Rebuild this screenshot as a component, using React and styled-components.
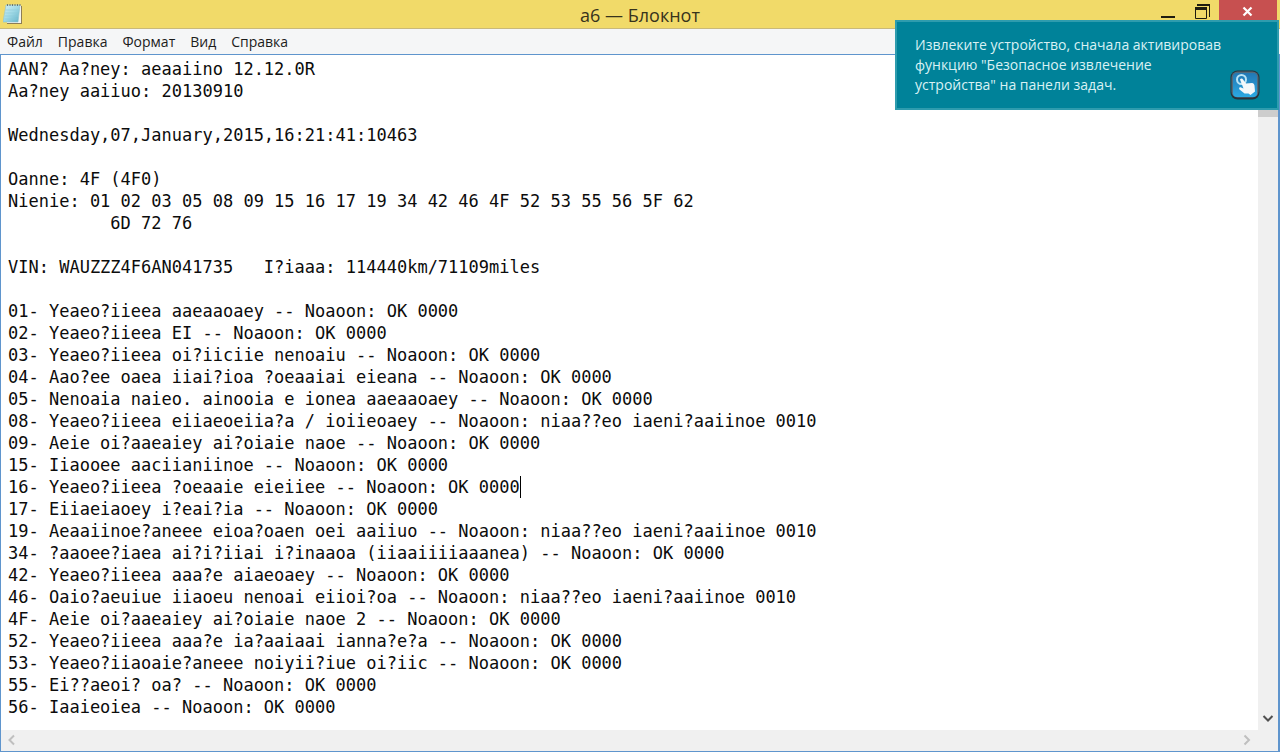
import React, { useState } from "react";
import styled, { createGlobalStyle } from "styled-components";

const GlobalStyle = createGlobalStyle`
    * {
        box-sizing: border-box;
    }
    body {
        margin: 0;
        font-family: "Open Sans", "Noto Sans", sans-serif;
        overflow: hidden;
    }
    button, textarea {
        font: inherit;
        margin: 0;
        padding: 0;
        border: 0;
        background: none;
    }
`;

const Window = styled.div`
    height: 100vh;
    display: flex;
    flex-direction: column;
    background: #f5f6f7;
`;

const TitleBar = styled.header`
    display: grid;
    grid-template-columns: 1fr auto 1fr;
    height: 29px;
    background: #f1da69;
    border-bottom: 1px solid #c9b97a;
`;

const AppIcon = styled.svg`
    width: 20px;
    height: 22px;
    margin: 3px 0 0 3px;
`;

const Title = styled.h1`
    margin: 0;
    padding-top: 2px;
    font-size: 18px;
    font-weight: 400;
    line-height: 26px;
    color: #37331c;
`;

const Controls = styled.div`
    display: flex;
    justify-content: flex-end;
    padding-right: 3px;
`;

const ControlButton = styled.button`
    width: ${({ $close }) => ($close ? "58px" : "34px")};
    height: 22px;
    background: ${({ $close }) => ($close ? "#c75050" : "transparent")};

    svg {
        display: block;
        margin: 0 auto;
    }
`;

const MenuBar = styled.nav`
    display: flex;
    gap: 15px;
    height: 25px;
    padding-left: 7px;
    background: #f5f6f7;
`;

const MenuItem = styled.button`
    font-size: 14px;
    line-height: 25px;
    color: #1c1c1c;
`;

const Body = styled.main`
    flex: 1;
    min-height: 0;
    display: grid;
    grid-template-columns: 1fr 20px;
    grid-template-rows: 1fr 21px;
    border: 1px solid #5f95cd;
    border-right-width: 2px;
    background: #f0f0f0;
`;

const Editor = styled.div`
    position: relative;
    min-width: 0;
    background: #fff;
    font-family: "DejaVu Sans Mono", monospace;
    font-size: 17px;
    line-height: 22px;
`;

const TextArea = styled.textarea`
    display: block;
    width: 100%;
    height: 100%;
    padding: 3px 7px 0;
    color: #0c0c0c;
    white-space: pre;
    resize: none;
    outline: none;
    overflow: hidden;
`;

const Caret = styled.span`
    position: absolute;
    width: 1px;
    height: 22px;
    background: #000;
`;

const VScroll = styled.div`
    display: flex;
    flex-direction: column;
    justify-content: space-between;
`;

const Thumb = styled.div`
    height: 62px;
    background: #cdcdcd;
`;

const HScroll = styled.div`
    display: flex;
    justify-content: space-between;
`;

const ScrollButton = styled.button`
    width: 20px;
    height: 20px;

    svg {
        display: block;
        margin: auto;
    }
`;

const Toast = styled.aside`
    position: fixed;
    top: 20px;
    right: 1px;
    width: 384px;
    display: flex;
    align-items: flex-end;
    justify-content: space-between;
    padding: 13px 17px 8px 18px;
    background: #008299;
    border: 2px solid #2e9cae;
`;

const ToastText = styled.p`
    margin: 0;
    padding-bottom: 5px;
    width: 310px;
    font-size: 14px;
    line-height: 20px;
    color: #d9f1f4;
`;

const menu = ["Файл", "Правка", "Формат", "Вид", "Справка"];

const lines = [
    "AAN? Aa?ney: aeaaiino 12.12.0R",
    "Aa?ney aaiiuo: 20130910",
    "",
    "Wednesday,07,January,2015,16:21:41:10463",
    "",
    "Oanne: 4F (4F0)",
    "Nienie: 01 02 03 05 08 09 15 16 17 19 34 42 46 4F 52 53 55 56 5F 62",
    "          6D 72 76",
    "",
    "VIN: WAUZZZ4F6AN041735   I?iaaa: 114440km/71109miles",
    "",
    "01- Yeaeo?iieea aaeaaoaey -- Noaoon: OK 0000",
    "02- Yeaeo?iieea EI -- Noaoon: OK 0000",
    "03- Yeaeo?iieea oi?iiciie nenoaiu -- Noaoon: OK 0000",
    "04- Aao?ee oaea iiai?ioa ?oeaaiai eieana -- Noaoon: OK 0000",
    "05- Nenoaia naieo. ainooia e ionea aaeaaoaey -- Noaoon: OK 0000",
    "08- Yeaeo?iieea eiiaeoeiia?a / ioiieoaey -- Noaoon: niaa??eo iaeni?aaiinoe 0010",
    "09- Aeie oi?aaeaiey ai?oiaie naoe -- Noaoon: OK 0000",
    "15- Iiaooee aaciianiinoe -- Noaoon: OK 0000",
    "16- Yeaeo?iieea ?oeaaie eieiiee -- Noaoon: OK 0000",
    "17- Eiiaeiaoey i?eai?ia -- Noaoon: OK 0000",
    "19- Aeaaiinoe?aneee eioa?oaen oei aaiiuo -- Noaoon: niaa??eo iaeni?aaiinoe 0010",
    "34- ?aaoee?iaea ai?i?iiai i?inaaoa (iiaaiiiiaaanea) -- Noaoon: OK 0000",
    "42- Yeaeo?iieea aaa?e aiaeoaey -- Noaoon: OK 0000",
    "46- Oaio?aeuiue iiaoeu nenoai eiioi?oa -- Noaoon: niaa??eo iaeni?aaiinoe 0010",
    "4F- Aeie oi?aaeaiey ai?oiaie naoe 2 -- Noaoon: OK 0000",
    "52- Yeaeo?iieea aaa?e ia?aaiaai ianna?e?a -- Noaoon: OK 0000",
    "53- Yeaeo?iiaoaie?aneee noiyii?iue oi?iic -- Noaoon: OK 0000",
    "55- Ei??aeoi? oa? -- Noaoon: OK 0000",
    "56- Iaaieoiea -- Noaoon: OK 0000",
];

const NotepadIcon = () => (
    <AppIcon viewBox="0 0 20 22" aria-hidden="true">
        <defs>
            <linearGradient id="page" x1="0" y1="0" x2="1" y2="1">
                <stop offset="0" stopColor="#d8f1f5" />
                <stop offset="0.5" stopColor="#9fd9e6" />
                <stop offset="1" stopColor="#5fb0c6" />
            </linearGradient>
        </defs>
        <path d="M4 3h15v18H4z" fill="#8d7d55" />
        <path d="M4 2h14v18H4z" fill="#f3f4ef" />
        <path d="M3 2h14l-2 17H0z" fill="url(#page)" stroke="#8fc3cd" strokeWidth="0.6" />
        <path d="M2.5 7h13M2.2 10h13M1.8 13h13M1.4 16h13" stroke="#8fcbd8" strokeWidth="0.6" />
        <path d="M4.500 1v2M7 1v2M9.500 1v2M12 1v2M14.500 1v2M17 1v2" stroke="#70776f" />
    </AppIcon>
);

const TouchIcon = () => (
    <svg width="30" height="30" viewBox="0 0 30 30" aria-hidden="true">
        <defs>
            <linearGradient id="touch" x1="0" y1="0" x2="0" y2="1">
                <stop offset="0" stopColor="#2278b4" />
                <stop offset="1" stopColor="#2ba8e2" />
            </linearGradient>
        </defs>
        <rect x="0.500" y="0.500" width="29" height="29" rx="7" fill="#26323c" />
        <rect x="1.500" y="1.500" width="27" height="26" rx="6" fill="#526b7b" />
        <rect x="3" y="3" width="24" height="24" rx="4" fill="url(#touch)" />
        <circle cx="11.500" cy="9.500" r="4.500" fill="none" stroke="#b9e4f5" strokeWidth="2" />
        <path
            d="M10 9.500c1-1.500 2.500-1 3 0l3 4 6-.5c1.500 0 2 1 2.500 2.500l.5 6-4.500 3.500-2-1.500h-4l-5-4c-1-1.500 0-2.500 1.500-2l2.500 1z"
            fill="#f4f8fa"
        />
    </svg>
);

const Chevron = ({ d, color }) => (
    <svg width="12" height="12" viewBox="0 0 12 12" aria-hidden="true">
        <path d={d} fill="none" stroke={color} strokeWidth="2" />
    </svg>
);

const App = () => {
    const [text, setText] = useState(lines.join("\n"));
    const [caret, setCaret] = useState({ row: 19, col: 50 });

    const moveCaret = (e) => {
        const before = e.target.value.slice(0, e.target.selectionStart).split("\n");
        setCaret({ row: before.length - 1, col: before[before.length - 1].length });
    };

    return (
        <Window>
            <GlobalStyle />
            <TitleBar>
                <NotepadIcon />
                <Title>a6 — Блокнот</Title>
                <Controls>
                    <ControlButton aria-label="Свернуть">
                        <svg width="16" height="22" viewBox="0 0 16 22">
                            <path d="M1 17h14" stroke="#1f1c10" strokeWidth="2" />
                        </svg>
                    </ControlButton>
                    <ControlButton aria-label="Развернуть">
                        <svg width="16" height="22" viewBox="0 0 16 22">
                            <path d="M3 5h12" stroke="#1f1c10" strokeWidth="2" />
                            <path d="M15.500 4v13" stroke="#1f1c10" />
                            <path d="M1.500 8.500h11v10h-11z" fill="none" stroke="#1f1c10" />
                            <path d="M1 8.500h12" stroke="#1f1c10" strokeWidth="3" />
                        </svg>
                    </ControlButton>
                    <ControlButton $close aria-label="Закрыть">
                        <svg width="12" height="22" viewBox="0 0 12 22">
                            <path d="M1.500 7.500l8 8M9.500 7.500l-8 8" stroke="#fff" strokeWidth="2.200" />
                        </svg>
                    </ControlButton>
                </Controls>
            </TitleBar>
            <MenuBar>
                {menu.map((item) => (
                    <MenuItem key={item}>{item}</MenuItem>
                ))}
            </MenuBar>
            <Body>
                <Editor>
                    <TextArea
                        aria-label="Текст"
                        spellCheck={false}
                        value={text}
                        onChange={(e) => setText(e.target.value)}
                        onSelect={moveCaret}
                    />
                    <Caret style={{ top: 3 + caret.row * 22, left: `calc(7px + ${caret.col}ch)` }} />
                </Editor>
                <VScroll>
                    <Thumb />
                    <ScrollButton aria-label="Вниз">
                        <Chevron d="M1.500 2L6 6.500L10.500 2" color="#505050" />
                    </ScrollButton>
                </VScroll>
                <HScroll>
                    <ScrollButton aria-label="Влево">
                        <Chevron d="M9 1.500L4.500 6L9 10.500" color="#bfbfbf" />
                    </ScrollButton>
                    <ScrollButton aria-label="Вправо">
                        <Chevron d="M2.500 1.500L7 6L2.500 10.500" color="#bfbfbf" />
                    </ScrollButton>
                </HScroll>
            </Body>
            <Toast role="status">
                <ToastText>
                    Извлеките устройство, сначала активировав функцию "Безопасное извлечение устройства" на панели задач.
                </ToastText>
                <TouchIcon />
            </Toast>
        </Window>
    );
};

export default App;
